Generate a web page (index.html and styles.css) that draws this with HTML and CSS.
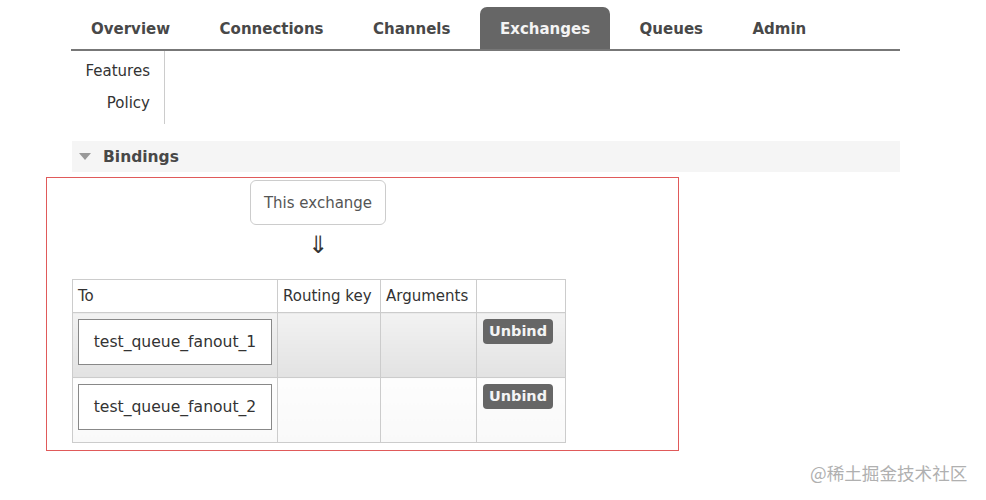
FILE: index.html
```html
<!DOCTYPE html>
<html>
<head>
<meta charset="utf-8">
<link rel="stylesheet" href="styles.css">
</head>
<body>
<div class="page">
  <nav class="tabs">
    <a class="tab">Overview</a>
    <a class="tab">Connections</a>
    <a class="tab">Channels</a>
    <a class="tab active">Exchanges</a>
    <a class="tab">Queues</a>
    <a class="tab">Admin</a>
  </nav>
  <div class="sub">
    <ul class="submenu">
      <li>Features</li>
      <li>Policy</li>
    </ul>
  </div>
  <div class="section-head">
    <span class="tri"></span>
    <span class="section-title">Bindings</span>
  </div>
  <div class="annot">
    <div class="bind-src">This exchange</div>
    <div class="arrow">⇓</div>
    <table class="bindings">
      <thead>
        <tr><th class="c-to">To</th><th class="c-rk">Routing key</th><th class="c-args">Arguments</th><th class="c-act"></th></tr>
      </thead>
      <tbody>
        <tr class="alt1">
          <td><div class="q">test_queue_fanout_1</div></td><td></td><td></td>
          <td class="act"><span class="btn">Unbind</span></td>
        </tr>
        <tr class="alt2">
          <td><div class="q">test_queue_fanout_2</div></td><td></td><td></td>
          <td class="act"><span class="btn">Unbind</span></td>
        </tr>
      </tbody>
    </table>
  </div>
</div>
<div class="watermark">@稀土掘金技术社区</div>
</body>
</html>
```
FILE: styles.css
```css
html, body {
  margin: 0;
  padding: 0;
  background: #fff;
}
body {
  font-family: "DejaVu Sans", Verdana, sans-serif;
  color: #444;
  position: relative;
  width: 986px;
  height: 500px;
  overflow: hidden;
}
.page {
  margin-left: 72px;
  width: 828px;
}
.tabs {
  display: flex;
  margin-top: 7px;
  border-bottom: 2px solid #777;
  height: 42px;
  margin-left: -1px;
}
.tab {
  display: flex;
  align-items: center;
  padding: 2px 20px 0 20px;
  margin-right: 9.5px;
  font-weight: bold;
  font-size: 15px;
  color: #484848;
  border-radius: 7px 7px 0 0;
}
.tab.active {
  background: #666;
  color: #f4f4f4;
}
.sub {
  display: flex;
}
.submenu {
  list-style: none;
  margin: 0;
  padding: 7px 14px 12px 0;
  width: 78px;
  border-right: 1px solid #ccc;
  text-align: right;
  font-size: 15px;
  color: #333;
}
.submenu li {
  height: 32px;
  line-height: 26px;
}
.submenu li:last-child {
  height: 22px;
}
.section-head {
  margin-top: 17px;
  height: 31px;
  background: #f5f5f5;
  display: flex;
  align-items: center;
}
.tri {
  width: 0;
  height: 0;
  margin-left: 7px;
  border-left: 6px solid transparent;
  border-right: 6px solid transparent;
  border-top: 7px solid #999;
}
.section-title {
  margin-left: 12px;
  font-weight: bold;
  font-size: 15.5px;
  color: #484848;
}
.annot {
  margin-left: -26px;
  margin-top: 5px;
  width: 606px;
  height: 272px;
  padding-left: 25px;
  border: 1px solid #e05a5a;
}
.bind-src {
  margin-left: 178px;
  margin-top: 2px;
  width: 134px;
  height: 43px;
  border: 1px solid #ccc;
  border-radius: 6px;
  display: flex;
  align-items: center;
  justify-content: center;
  font-size: 15px;
  color: #555;
}
.arrow {
  margin-left: 178px;
  width: 136px;
  text-align: center;
  font-size: 24px;
  line-height: 30px;
  height: 32px;
  color: #333;
  margin-top: 5px;
}
.bindings {
  border-collapse: collapse;
  font-size: 15px;
  color: #333;
  margin-top: 17px;
}
.bindings th, .bindings td {
  border: 1px solid #ccc;
  padding: 0;
}
.bindings th {
  font-weight: normal;
  text-align: left;
  height: 32px;
  padding: 0 5px;
  background: #fff;
}
.c-to { width: 194px; }
.c-rk { width: 92px; }
.c-args { width: 85px; }
.c-act { width: 78px; }
.bindings td {
  height: 64px;
  vertical-align: top;
}
.alt1 td {
  background: linear-gradient(#f2f2f2, #e2e2e2);
}
.alt2 td {
  background: linear-gradient(#fdfdfd, #f9f9f9);
}
.q {
  margin: 6px 5px 0 5px;
  height: 44px;
  border: 1px solid #888;
  background: #fff;
  display: flex;
  align-items: center;
  justify-content: center;
  font-size: 15.6px;
  color: #333;
}
.act {
  padding-left: 6px !important;
}
.btn {
  display: inline-block;
  margin-top: 6px;
  width: 70px;
  height: 25px;
  line-height: 24px;
  background: #666;
  color: #f4f4f4;
  border-radius: 4px;
  font-weight: bold;
  font-size: 14.5px;
  text-align: center;
}
.watermark {
  position: absolute;
  left: 810px;
  top: 460px;
  font-family: "Noto Sans CJK SC", sans-serif;
  font-size: 17.6px;
  color: #b0b0b0;
}
```
